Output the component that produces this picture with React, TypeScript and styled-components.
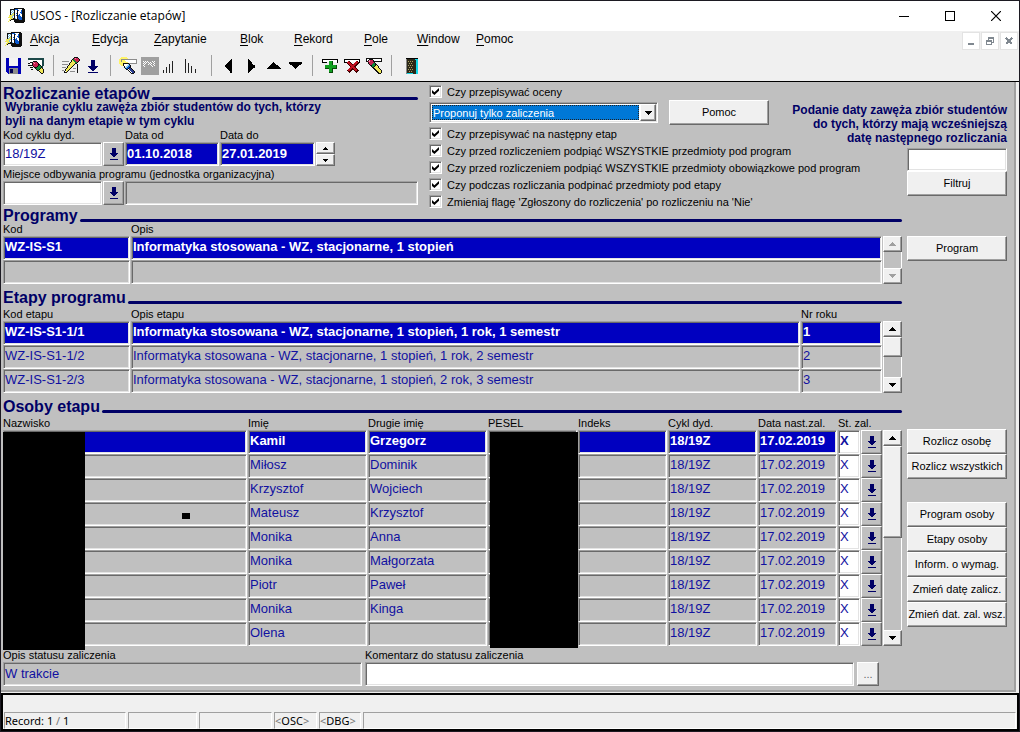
import React, { useState } from "react";
import styled, { createGlobalStyle, css } from "styled-components";

const GlobalStyle = createGlobalStyle`
  *, *::before, *::after { box-sizing: border-box; }
  body {
    margin: 0;
    background: #f0f0f0;
    color: #000;
    font-family: "Liberation Sans", Arial, sans-serif;
    font-size: 11px;
    line-height: 14px;
  }
  button, input, select { font: inherit; color: inherit; margin: 0; padding: 0; border-radius: 0; }
`;

const navy = "#000066";
const ink = "#1010a0";
const face = "#c0c0c0";

const raised = css`
  border: 1px solid;
  border-color: #fff #696969 #696969 #fff;
  box-shadow: inset -1px -1px 0 #a0a0a0;
`;

const sunken = css`
  border: 1px solid;
  border-color: #a0a0a0 #fff #fff #a0a0a0;
  box-shadow: inset 1px 1px 0 #696969, inset -1px -1px 0 #e3e3e3;
`;

/* ---------- window frame ---------- */

const Window = styled.div`
  display: flex;
  flex-direction: column;
  min-height: 100vh;
  border: 1px solid #1c1a22;
  background: #f0f0f0;
`;

const TitleBar = styled.header`
  display: flex;
  align-items: center;
  height: 30px;
  padding-left: 7px;
  background: #fff;
`;

const Title = styled.h1`
  flex: 1;
  margin: 0 0 0 4px;
  font: 400 12px/16px "Open Sans", "Noto Sans", sans-serif;
`;

const CaptionButton = styled.button`
  display: grid;
  place-items: center;
  width: 46px;
  height: 30px;
  border: 0;
  background: transparent;
`;

const MenuBar = styled.nav`
  display: flex;
  align-items: flex-start;
  height: 21px;
  padding: 1px 1px 0 4px;
`;

const MenuItems = styled.div`
  display: flex;
  flex: 1;
  margin-left: 7px;
`;

const MenuItem = styled.button<{ $width: number }>`
  width: ${(p) => p.$width}px;
  border: 0;
  background: transparent;
  font-size: 12px;
  line-height: 15px;
  text-align: left;
  white-space: nowrap;
  u { text-underline-offset: 2px; }
`;

const ChildButtons = styled.div`
  display: flex;
  gap: 1px;
`;

const ChildButton = styled.button`
  display: grid;
  place-items: center;
  width: 18px;
  height: 18px;
  border: 1px solid #e3e3e3;
  background: #fff;
`;

const ToolBar = styled.div`
  display: flex;
  align-items: center;
  height: 30px;
  padding: 0 2px 2px;
  border-bottom: 1px solid #000;
`;

const ToolButton = styled.button`
  display: grid;
  place-items: center;
  width: 22px;
  height: 24px;
  border: 0;
  background: transparent;
`;

const ToolDivider = styled.span`
  width: 1px;
  height: 21px;
  margin: 0 6px;
  background: #a0a0a0;
`;

/* ---------- form ---------- */

const Canvas = styled.main`
  flex: 1;
  padding: 1px 7px 4px 2px;
  border: solid #a0a0a0;
  border-width: 0 2px 2px 0;
  margin-right: 3px;
  background: ${face};
`;

const TopArea = styled.section`
  display: grid;
  grid-template-columns: 415px minmax(0, 1fr) 100px;
  column-gap: 11px;
`;

const CycleBox = styled.div`
  display: flex;
  flex-direction: column;
  padding-top: 5px;
`;

const Section = styled.section`
  display: grid;
  grid-template-columns: minmax(0, 1fr) 100px;
  column-gap: 5px;
  margin-bottom: 8px;
`;

const PeopleSection = styled(Section)`
  margin-bottom: 2px;
`;

const Heading = styled.h2<{ $tight?: boolean }>`
  display: flex;
  align-items: flex-end;
  height: 12px;
  margin: 0 0 ${(p) => (p.$tight ? 0 : 3)}px;
  color: ${navy};
  font-size: 16px;
  line-height: 12px;
  white-space: nowrap;
  &::after {
    content: "";
    flex: 1;
    height: 3px;
    margin-left: 2px;
    border-radius: 2px;
    background: ${navy};
  }
`;

const Hint = styled.p<{ $right?: boolean }>`
  margin: 0;
  padding: 0 ${(p) => (p.$right ? 0 : 2)}px;
  color: ${navy};
  font-size: 12px;
  font-weight: 700;
  white-space: nowrap;
  text-align: ${(p) => (p.$right ? "right" : "left")};
`;

const FieldRow = styled.div`
  display: flex;
  align-items: flex-end;
  gap: 1px;
  & + & { margin-top: 1px; }
`;

const Labelled = styled.label<{ $width?: number }>`
  display: flex;
  flex-direction: column;
  ${(p) => (p.$width ? `flex: none; width: ${p.$width}px;` : "flex: 1;")}
  white-space: nowrap;
`;

const Input = styled.input<{ $look?: "selected" | "plain" }>`
  ${sunken}
  width: 100%;
  height: 24px;
  padding: 0 1px 2px;
  outline: 0;
  font-size: 13px;
  background: ${(p) => (p.$look === "selected" ? "#0000c0" : p.$look === "plain" ? face : "#fff")};
  color: ${(p) => (p.$look === "selected" ? "#fff" : ink)};
  font-weight: ${(p) => (p.$look === "selected" ? 700 : 400)};
`;

const UnitName = styled(Input)`
  flex: 1;
  width: auto;
  min-width: 0;
`;

const ListButton = styled.button`
  ${raised}
  display: grid;
  flex: none;
  place-items: center;
  width: 21px;
  height: 24px;
  background: ${face};
`;

const Stepper = styled.div`
  display: flex;
  flex-direction: column;
  width: 19px;
`;

const StepButton = styled.button`
  ${raised}
  display: grid;
  place-items: center;
  height: 12px;
  background: #f0f0f0;
`;

const Options = styled.div`
  display: flex;
  flex-direction: column;
`;

const CheckLabel = styled.label`
  display: flex;
  align-items: center;
  gap: 5px;
  height: 17px;
  white-space: nowrap;
`;

const CheckBox = styled.input.attrs({ type: "checkbox" })`
  ${sunken}
  appearance: none;
  flex: none;
  width: 13px;
  height: 13px;
  background: #fff;
  &:checked::before {
    content: "";
    display: block;
    width: 7px;
    height: 7px;
    margin: 2px;
    background: #000;
    clip-path: polygon(0 30%, 35% 60%, 100% 0, 100% 40%, 35% 100%, 0 70%);
  }
`;

const ModeRow = styled.div`
  display: flex;
  align-items: center;
  gap: 11px;
  height: 25px;
`;

const Combo = styled.div`
  ${sunken}
  display: flex;
  width: 229px;
  height: 21px;
  padding: 1px;
  background: #fff;
`;

const ComboSelect = styled.select`
  appearance: none;
  flex: 1;
  margin: 1px;
  border: 1px dotted #222;
  outline: 0;
  background: #0078d7;
  color: #fff;
`;

const ComboArrow = styled.span`
  ${raised}
  display: grid;
  place-items: center;
  width: 16px;
  background: #f0f0f0;
`;

const PushButton = styled.button`
  ${raised}
  width: 100px;
  height: 25px;
  padding-bottom: 1px;
  background: #f0f0f0;
  white-space: nowrap;
`;

const FilterBox = styled.div`
  display: flex;
  flex-direction: column;
  align-items: flex-end;
  padding-top: 20px;
`;

const FilterInput = styled(Input)`
  height: 23px;
  margin-top: 3px;
`;

const SideButtons = styled.div<{ $top: number }>`
  display: flex;
  flex-direction: column;
  padding-top: ${(p) => p.$top}px;
`;

const ButtonGroup = styled.div`
  display: flex;
  flex-direction: column;
  margin-bottom: 23px;
`;

/* ---------- record tables ---------- */

const TableRow = styled.div`
  position: relative;
  display: flex;
`;

const Table = styled.table`
  flex: 1;
  width: 100%;
  table-layout: fixed;
  border-collapse: collapse;
  th { height: 14px; padding: 0; font-weight: 400; text-align: left; white-space: nowrap; }
  td { height: 24px; padding: 0; }
`;

const Cell = styled.div<{ $active: boolean; $white?: boolean }>`
  ${sunken}
  height: 24px;
  margin-right: 1px;
  padding-left: 1px;
  overflow: hidden;
  font-size: 13px;
  line-height: 20px;
  white-space: nowrap;
  font-weight: ${(p) => (p.$active ? 700 : 400)};
  background: ${(p) => (p.$white ? "#fff" : p.$active ? "#0000c0" : face)};
  color: ${(p) => (p.$active && !p.$white ? "#fff" : ink)};
`;

const Scroll = styled.div`
  display: flex;
  flex-direction: column;
  width: 19px;
  margin-top: 14px;
  background: ${face};
  border-right: 1px solid #fff;
`;

const ScrollButton = styled.button`
  ${raised}
  display: grid;
  place-items: center;
  height: 16px;
  margin-right: -1px;
  background: #f0f0f0;
  color: #000;
  &:disabled { color: #a0a0a0; }
`;

const Track = styled.div`
  flex: 1;
  border-left: 1px solid #fff;
`;

const Thumb = styled.div<{ $height: number }>`
  ${raised}
  height: ${(p) => p.$height}px;
  margin: 0 -1px;
  background: #f0f0f0;
`;

const Redaction = styled.div`
  position: absolute;
  background: #000;
`;
const SurnameRedaction = styled(Redaction)`
  top: 16px;
  left: 0;
  width: 82px;
  height: 218px;
`;
const PeselRedaction = styled(Redaction)`
  top: 16px;
  right: 324px;
  width: 88px;
  height: 216px;
`;
const InkSpot = styled(Redaction)`
  top: 97px;
  left: 179px;
  width: 8px;
  height: 6px;
`;

const Footer = styled.section`
  display: grid;
  grid-template-columns: 359px minmax(0, 1fr) 22px;
  align-items: end;
  column-gap: 3px;
  padding-right: 128px;
`;

const MoreButton = styled(PushButton)`
  width: 22px;
  height: 24px;
  color: #666;
`;

/* ---------- status bar ---------- */

const StatusBar = styled.footer`
  margin-top: 1px;
  padding: 17px 1px 0;
  border: 2px solid #000;
`;

const StatusCells = styled.div`
  display: flex;
  gap: 2px;
`;

const StatusCell = styled.div<{ $width?: number }>`
  ${(p) => (p.$width ? `width: ${p.$width}px;` : "flex: 1;")}
  height: 17px;
  border: 1px solid;
  border-color: #a0a0a0 #fff #fff #a0a0a0;
  font: 400 11px/16px "Noto Sans", sans-serif;
  white-space: nowrap;
  i { color: #777; font-style: normal; }
`;

/* ---------- drawings ---------- */

const Svg = ({ w, h, children }: { w: number; h: number; children: React.ReactNode }) => (
  <svg width={w} height={h} viewBox={`0 0 ${w} ${h}`} shapeRendering="crispEdges" aria-hidden="true">
    {children}
  </svg>
);

const palette: Record<string, string> = {
  K: "#101010",
  W: "#ffffff",
  T: "#1c4848",
  R: "#c82050",
  P: "#f090b0",
  G: "#108838",
  Y: "#f0e858",
  y: "#fff468",
  g: "#8c8c8c",
  C: "#90d0f0",
  c: "#78c0e0",
  B: "#0a58d0",
  N: "#283c90",
};

/* Bitmap-style glyph: one letter of the palette per pixel, "." is clear. */
const Pixels = ({ rows }: { rows: string[] }) => (
  <>
    {rows.flatMap((row, y) =>
      [...row.matchAll(/([A-Za-z])\1*/g)].map((run) => (
        <rect key={`${y}-${run.index}`} x={run.index} y={y} width={run[0].length} height={1} fill={palette[run[1]]} />
      ))
    )}
  </>
);

const AppIcon = () => (
  <Svg w={18} h={16}>
    <Pixels
      rows={[
        "......KKKKKKKKKK.",
        "..KKKKKBBBWWWWKKK",
        "..KcWcKWWKBWWBKKK",
        "..KWcWKWWKWWWBKKK",
        "..KcWcKWWKWWBBKKK",
        "..KWcYKWBKWWWBKKK",
        "..KcYYKWWKWBWWKKK",
        ".YYYYcKWBKBBWWKKK",
        ".YYYcWKWWKBBBWKKK",
        "YYYYcWKWWKBBBBKKK",
        "..YYYKKcWKBBBBKKK",
        ".YYKKKKKKKKBBBKKK",
        ".YK...KKKKKKKKKKK",
        "Y.....KKKKKKKKKKK",
        ".......KKKKKKKKK.",
      ]}
    />
  </Svg>
);

const Triangle = ({ dir }: { dir: "up" | "down" }) => (
  <Svg w={7} h={4}>
    <path d={dir === "up" ? "M3 0h1v1h1v1h1v1h1v1H0V3h1V2h1V1h1z" : "M0 0h7v1H6v1H5v1H4v1H3V3H2V2H1V1H0z"} fill="currentColor" />
  </Svg>
);

const SmallTriangle = ({ dir }: { dir: "up" | "down" }) => (
  <Svg w={5} h={3}>
    <path d={dir === "up" ? "M2 0h1v1h1v1h1v1H0V2h1V1h1z" : "M0 0h5v1H4v1H3v1H2V2H1V1H0z"} fill="#000" />
  </Svg>
);

const DownArrow = () => (
  <Svg w={9} h={12}>
    <path d="M3 0h4v5h2v1H8v1H7v1H6v1H4V8H3V7H2V6H1V5h2zM1 11h8v1H1z" fill={navy} />
  </Svg>
);

const icons: Record<string, React.ReactNode> = {
  save: (
    <>
      <path d="M1 1h15v16H3l-2-2z" fill="#0000b8" />
      <path d="M4 1h9v8H4z" fill="#f4f4f4" />
      <path d="M4 11h9v6H4z" fill="#8c8c8c" />
      <path d="M5 12h3v4H5z" fill="#000050" />
    </>
  ),
  query: (
    <g transform="translate(1 1)">
      <Pixels
        rows={[
          "TTTTTTTTTTTTTTTT",
          "TTTTTTTTTTTTTTTT",
          ".WWWWWWWWWWWWWTT",
          ".WWWWKKKKWWWWWTT",
          ".WKKKPRRRKWWWWTT",
          "KKWWKRPRRRKWWWTT",
          "..WWKRRRRRKKWWTT",
          "KKKKKRRRRRKGKWTT",
          ".....KRRRKGGGKT.",
          "..KKK.KKKGGGGKT.",
          ".......KGGGGKYK.",
          "...KK...KGGKYYYK",
          ".........KKYYYYK",
          "...........KYYYK",
          "............KYYK",
          ".............KK.",
        ]}
      />
    </g>
  ),
  edit: (
    <Pixels
      rows={[
        "............KKKK..",
        "...........KRPRRK.",
        "..........KGRRRRRK",
        ".........KYGGRRRRK",
        "ggggggg..KYYGGRRK.",
        "........KYYYYGGK..",
        ".......KYYYYYKK...",
        "gggggg.KYYYYK..K..",
        "......KYYYYK...K..",
        ".....KYYYYK....K..",
        "gggg.KYYYK.....K..",
        "....KYYYK..ggg.K..",
        "...KYYYK.......K..",
        "gg.KYYK........K..",
        "..KWYK..ggggg..K..",
        "..KKK..........K..",
      ]}
    />
  ),
  list: <path d="M7 3h4v6h3v1h-1v1h-1v1h-1v1h-1v1H8v-1H7v-1H6v-1H5v-1H4V9h3zM4 15h10v1H4z" fill={navy} />,
  torch: (
    <Pixels
      rows={[
        "..yyyyyy..........",
        ".yyyyyyyy.........",
        "yygggggggggggggggg",
        "yygyyyWWWWWWWWWWWg",
        "yygyyyyWWWWWWWWWWg",
        "yyyyyyyyyWWWWWWWWg",
        "yyyyKKKKKKgggggggg",
        ".yyyKWWWWCK.......",
        "..yyKWWWCCBK......",
        ".....KWCCBBK......",
        ".....KCCBBKK......",
        "......KBBKNNK.....",
        ".......KKWNNNK....",
        ".........KWNNNK...",
        "..........KWNNNK..",
        "...........KWNNK..",
        "............KKK...",
      ]}
    />
  ),
  disabled: (
    <>
      <path d="M0 0h18v18H0z" fill="#9f9f9f" />
      <Pixels
        rows={[
          "",
          "",
          "",
          "",
          "..W.W.W....W.W..",
          "...W.W.W.W..W...",
          "..W.W...W.W..W..",
          "...W...W.W..W...",
          "..W.......W..W..",
          "...W.......W....",
        ]}
      />
    </>
  ),
  barsUp: <path d="M0 13h1v3H0zM3 10h1v6H3zM6 7h1v9H6zM9 4h1v12H9z" fill="#222" />,
  barsDown: <path d="M0 2h1v14H0zM3 6h1v10H3zM6 9h1v7H6zM10 12h1v4h-1z" fill="#222" />,
  left: <path d="M12 2v14h-2v-2H9v-1H8v-1H7v-1H6v-1H5V8h1V7h1V6h1V5h1V4h1V3h1V2z" fill="#000" />,
  right: <path d="M6 2v14h1v-1h1v-1h1v-1h1v-1h1v-1h2V8h-2V7h-1V5H9V4H8V3H7V2z" fill="#000" />,
  up: <path d="M9 5h1v1h1v1h1v1h2v1h1v1h1v1h1v1H3v-1h1v-1h1V9h1V8h1V7h1V6h1z" fill="#000" />,
  down: <path d="M3 5h13v2h-1v1h-2v1h-1v1h-1v1h-1v1H9v-1H8v-1H7V9H6V8H4V7H3z" fill="#000" />,
  add: (
    <>
      <path d="M1 2h16v4h-1V3H2v2h4v1H1z" fill="#000" />
      <path d="M2 3h14v2H2z" fill="#fff" />
      <path d="M8 4h4v4h4v4h-4v4H8v-4H4V8h4z" fill="#084808" />
      <path d="M8 4h3v4h4v3h-4v4H8v-4H4V8h4z" fill="#10a020" />
    </>
  ),
  remove: (
    <>
      <path d="M1 2h16v4h-1V3H2v2h2v1H1z" fill="#000" />
      <path d="M2 3h14v2H2z" fill="#fff" />
      <path d="M5 5l10 10M15 5L5 15" stroke="#400000" strokeWidth="4" />
      <path d="M5 5l9 9M14 5l-9 9" stroke="#c01020" strokeWidth="2" />
    </>
  ),
  clear: (
    <g transform="translate(1 1)">
      <Pixels
        rows={[
          "KKKKKKKKKKKKKKKK",
          "KWWKKKKWWWWWWWWK",
          "KWKPRRRKWWWWWWWK",
          "KKRPRRRKKKKKKKKK",
          "..KRRRRRK.......",
          "..KRRRRGGK......",
          "...KRRGGGKK.....",
          "....KKGGGKYK....",
          ".....KGGKYYYK...",
          "......KKYYYYK...",
          ".......KKYYYYK..",
          "........KKYYYYK.",
          ".........KKYYYYK",
          "..........KKYYYK",
          "...........KKYYK",
          "............KKK.",
        ]}
      />
    </g>
  ),
  exit: (
    <>
      <path d="M6 2h12v15H6z" fill="#10d8e8" />
      <path d="M6 1h12v1H6z" fill="#000" />
      <path d="M6 2h8l2 2v13h-3v-1H6z" fill="#2c2818" />
      <path d="M8 4h1v1H8zM10 4h1v1h-1zM12 4h1v1h-1zM9 6h1v1H9zM11 6h1v1h-1zM8 8h1v1H8zM10 8h1v1h-1zM12 8h1v1h-1zM9 10h1v1H9zM11 10h1v1h-1zM8 12h1v1H8zM10 12h1v1h-1zM12 12h1v1h-1zM9 14h1v1H9zM11 14h1v1h-1z" fill="#a8a060" />
      <path d="M6 2h1v15H6z" fill="#888" />
    </>
  ),
};

/* ---------- data ---------- */

const menu = [
  ["Akcja", 62],
  ["Edycja", 62],
  ["Zapytanie", 86],
  ["Blok", 54],
  ["Rekord", 70],
  ["Pole", 53],
  ["Window", 59],
  ["Pomoc", 59],
] as const;

const tools: (readonly [string, string])[][] = [
  [["save", "Zapisz"], ["query", "Formularz"]],
  [["edit", "Edytuj"], ["list", "Lista wartości"]],
  [["torch", "Zapytanie"], ["disabled", "Wykonaj"], ["barsUp", "Sortuj rosnąco"], ["barsDown", "Sortuj malejąco"]],
  [["left", "Poprzedni blok"], ["right", "Następny blok"], ["up", "Poprzedni rekord"], ["down", "Następny rekord"]],
  [["add", "Dodaj rekord"], ["remove", "Usuń rekord"], ["clear", "Wyczyść rekord"]],
  [["exit", "Wyjście"]],
];

const options = [
  "Czy przepisywać na następny etap",
  "Czy przed rozliczeniem podpiąć WSZYSTKIE przedmioty pod program",
  "Czy przed rozliczeniem podpiąć WSZYSTKIE przedmioty obowiązkowe pod program",
  "Czy podczas rozliczania podpinać przedmioty pod etapy",
  "Zmieniaj flagę 'Zgłoszony do rozliczenia' po rozliczeniu na 'Nie'",
];

const stages = [
  ["WZ-IS-S1-1/1", "Informatyka stosowana - WZ, stacjonarne, 1 stopień, 1 rok, 1 semestr", "1"],
  ["WZ-IS-S1-1/2", "Informatyka stosowana - WZ, stacjonarne, 1 stopień, 1 rok, 2 semestr", "2"],
  ["WZ-IS-S1-2/3", "Informatyka stosowana - WZ, stacjonarne, 1 stopień, 2 rok, 3 semestr", "3"],
];

const people = [
  ["Kamil", "Grzegorz"],
  ["Miłosz", "Dominik"],
  ["Krzysztof", "Wojciech"],
  ["Mateusz", "Krzysztof"],
  ["Monika", "Anna"],
  ["Monika", "Małgorzata"],
  ["Piotr", "Paweł"],
  ["Monika", "Kinga"],
  ["Olena", ""],
];

/* ---------- composite parts ---------- */

const Option = ({ text }: { text: string }) => {
  const [on, setOn] = useState(true);
  return (
    <CheckLabel>
      <CheckBox checked={on} onChange={() => setOn(!on)} />
      {text}
    </CheckLabel>
  );
};

const ScrollBar = ({ thumb, disabled }: { thumb?: number; disabled?: boolean }) => (
  <Scroll>
    <ScrollButton disabled={disabled} aria-label="W górę"><Triangle dir="up" /></ScrollButton>
    <Track>{thumb ? <Thumb $height={thumb} /> : null}</Track>
    <ScrollButton disabled={disabled} aria-label="W dół"><Triangle dir="down" /></ScrollButton>
  </Scroll>
);

const ValueList = () => (
  <ListButton aria-label="Lista wartości"><DownArrow /></ListButton>
);

export default function App() {
  return (
    <>
      <GlobalStyle />
      <Window>
        <TitleBar>
          <AppIcon />
          <Title>USOS - [Rozliczanie etapów]</Title>
          <CaptionButton aria-label="Minimalizuj">
            <Svg w={10} h={10}><path d="M0 5h10v1H0z" /></Svg>
          </CaptionButton>
          <CaptionButton aria-label="Maksymalizuj">
            <Svg w={10} h={10}><path d="M.5.5h9v9h-9z" fill="none" stroke="#000" /></Svg>
          </CaptionButton>
          <CaptionButton aria-label="Zamknij">
            <svg width="10" height="10" viewBox="0 0 10 10" aria-hidden="true"><path d="M0 0l10 10M10 0L0 10" stroke="#000" strokeWidth="1.2" /></svg>
          </CaptionButton>
        </TitleBar>
        <MenuBar>
          <AppIcon />
          <MenuItems>
            {menu.map(([name, width]) => (
              <MenuItem key={name} $width={width}><u>{name[0]}</u>{name.slice(1)}</MenuItem>
            ))}
          </MenuItems>
          <ChildButtons>
            <ChildButton aria-label="Minimalizuj okno"><Svg w={8} h={8}><path d="M1 6h6v2H1z" fill="#808890" /></Svg></ChildButton>
            <ChildButton aria-label="Przywróć okno">
              <Svg w={8} h={8}><path d="M2 0h6v6H6V5h1V2H3v1H2zM0 3h6v5H0zM1 5v2h4V5z" fill="#808890" fillRule="evenodd" /></Svg>
            </ChildButton>
            <ChildButton aria-label="Zamknij okno"><Svg w={8} h={8}><path d="M1 1l6 6M7 1L1 7" stroke="#808890" strokeWidth="2" /></Svg></ChildButton>
          </ChildButtons>
        </MenuBar>
        <ToolBar>
          {tools.map((group, g) => (
            <React.Fragment key={g}>
              {g > 0 && <ToolDivider />}
              {group.map(([id, label]) => (
                <ToolButton key={id} aria-label={label}><Svg w={18} h={18}>{icons[id]}</Svg></ToolButton>
              ))}
            </React.Fragment>
          ))}
        </ToolBar>

        <Canvas>
          <TopArea>
            <CycleBox>
              <Heading $tight>Rozliczanie etapów</Heading>
              <Hint>
                Wybranie cyklu zawęża zbiór studentów do tych, którzy
                <br />
                byli na danym etapie w tym cyklu
              </Hint>
              <FieldRow>
                <Labelled $width={99}>Kod cyklu dyd.<Input defaultValue="18/19Z" /></Labelled>
                <ValueList />
                <Labelled $width={94}>Data od<Input $look="selected" defaultValue="01.10.2018" /></Labelled>
                <Labelled $width={95}>Data do<Input $look="selected" defaultValue="27.01.2019" /></Labelled>
                <Stepper>
                  <StepButton aria-label="Następny cykl"><SmallTriangle dir="up" /></StepButton>
                  <StepButton aria-label="Poprzedni cykl"><SmallTriangle dir="down" /></StepButton>
                </Stepper>
              </FieldRow>
              <FieldRow>
                <Labelled $width={99}>Miejsce odbywania programu (jednostka organizacyjna)<Input /></Labelled>
                <ValueList />
                <UnitName $look="plain" readOnly aria-label="Nazwa jednostki" />
              </FieldRow>
            </CycleBox>
            <Options>
              <Option text="Czy przepisywać oceny" />
              <ModeRow>
                <Combo>
                  <ComboSelect aria-label="Sposób przepisywania ocen">
                    <option>Proponuj tylko zaliczenia</option>
                  </ComboSelect>
                  <ComboArrow><Triangle dir="down" /></ComboArrow>
                </Combo>
                <PushButton>Pomoc</PushButton>
              </ModeRow>
              {options.map((text) => <Option key={text} text={text} />)}
            </Options>
            <FilterBox>
              <Hint $right as="label" htmlFor="filter-date">
                Podanie daty zawęża zbiór studentów
                <br />
                do tych, którzy mają wcześniejszą
                <br />
                datę następnego rozliczania
              </Hint>
              <FilterInput id="filter-date" />
              <PushButton>Filtruj</PushButton>
            </FilterBox>
          </TopArea>

          <Section>
            <div>
              <Heading $tight>Programy</Heading>
              <TableRow>
                <Table>
                  <colgroup><col width="128" /><col /></colgroup>
                  <thead><tr><th>Kod</th><th>Opis</th></tr></thead>
                  <tbody>
                    <tr>
                      <td><Cell $active>WZ-IS-S1</Cell></td>
                      <td><Cell $active>Informatyka stosowana - WZ, stacjonarne, 1 stopień</Cell></td>
                    </tr>
                    <tr>
                      <td><Cell $active={false} /></td>
                      <td><Cell $active={false} /></td>
                    </tr>
                  </tbody>
                </Table>
                <ScrollBar disabled />
              </TableRow>
            </div>
            <SideButtons $top={26}><PushButton>Program</PushButton></SideButtons>
          </Section>

          <Section>
            <div>
              <Heading>Etapy programu</Heading>
              <TableRow>
                <Table>
                  <colgroup><col width="128" /><col /><col width="82" /></colgroup>
                  <thead><tr><th>Kod etapu</th><th>Opis etapu</th><th>Nr roku</th></tr></thead>
                  <tbody>
                    {stages.map((row, i) => (
                      <tr key={row[0]}>
                        {row.map((value) => <td key={value}><Cell $active={i === 0}>{value}</Cell></td>)}
                      </tr>
                    ))}
                  </tbody>
                </Table>
                <ScrollBar thumb={20} />
              </TableRow>
            </div>
          </Section>

          <PeopleSection>
            <div>
              <Heading>Osoby etapu</Heading>
              <TableRow>
                <Table>
                  <colgroup>
                    <col /><col width="120" /><col width="120" /><col width="90" /><col width="90" />
                    <col width="90" /><col width="80" /><col width="23" /><col width="22" />
                  </colgroup>
                  <thead>
                    <tr>
                      <th>Nazwisko</th><th>Imię</th><th>Drugie imię</th><th>PESEL</th><th>Indeks</th>
                      <th>Cykl dyd.</th><th>Data nast.zal.</th><th colSpan={2}>St. zal.</th>
                    </tr>
                  </thead>
                  <tbody>
                    {people.map(([first, second], i) => (
                      <tr key={i}>
                        {["", first, second, "", "", "18/19Z", "17.02.2019"].map((value, c) => (
                          <td key={c}><Cell $active={i === 0}>{value}</Cell></td>
                        ))}
                        <td><Cell $active={i === 0} $white>X</Cell></td>
                        <td><ValueList /></td>
                      </tr>
                    ))}
                  </tbody>
                </Table>
                <ScrollBar thumb={92} />
                <SurnameRedaction />
                <PeselRedaction />
                <InkSpot />
              </TableRow>
            </div>
            <SideButtons $top={28}>
              <ButtonGroup>
                <PushButton>Rozlicz osobę</PushButton>
                <PushButton>Rozlicz wszystkich</PushButton>
              </ButtonGroup>
              <PushButton>Program osoby</PushButton>
              <PushButton>Etapy osoby</PushButton>
              <PushButton>Inform. o wymag.</PushButton>
              <PushButton>Zmień datę zalicz.</PushButton>
              <PushButton>Zmień dat. zal. wsz.</PushButton>
            </SideButtons>
          </PeopleSection>

          <Footer>
            <Labelled>Opis statusu zaliczenia<Input $look="plain" readOnly defaultValue="W trakcie" /></Labelled>
            <Labelled>Komentarz do statusu zaliczenia<Input /></Labelled>
            <MoreButton aria-label="Edytuj komentarz">...</MoreButton>
          </Footer>
        </Canvas>

        <StatusBar>
          <StatusCells>
            <StatusCell $width={122}>Record: 1 <i>/</i> 1</StatusCell>
            <StatusCell $width={69} />
            <StatusCell $width={73} />
            <StatusCell $width={43}><i>&lt;</i>OSC<i>&gt;</i></StatusCell>
            <StatusCell $width={42}><i>&lt;</i>DBG<i>&gt;</i></StatusCell>
            <StatusCell />
          </StatusCells>
        </StatusBar>
      </Window>
    </>
  );
}
